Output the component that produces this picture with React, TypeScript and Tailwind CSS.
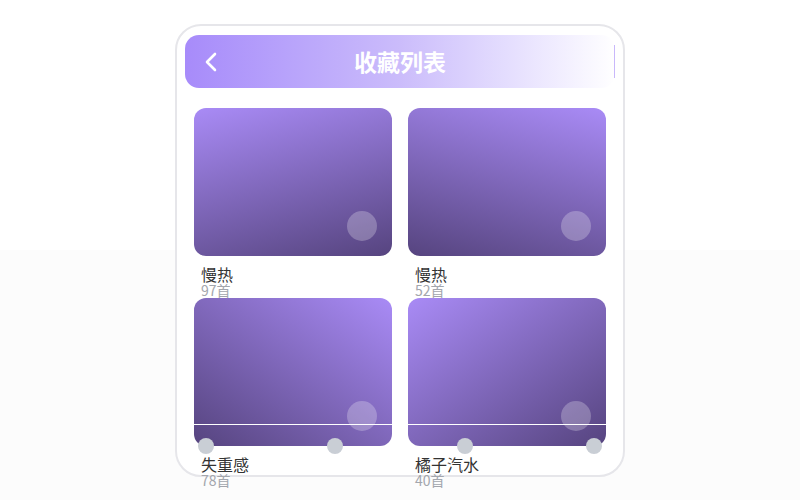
import React from "react"

type Item = { name: string; count: number; grad: string }

const items: Item[] = [
  { name: "慢热", count: 97, grad: "bg-[linear-gradient(165deg,#a98bf6,#56447f)]" },
  { name: "慢热", count: 52, grad: "bg-[linear-gradient(195deg,#a98bf6,#56447f)]" },
  { name: "失重感", count: 78, grad: "bg-[linear-gradient(215deg,#a98bf6,#56447f)]" },
  { name: "橘子汽水", count: 40, grad: "bg-[linear-gradient(145deg,#a98bf6,#56447f)]" },
]

function Card({ item }: { item: Item }) {
  return (
    <div className="flex flex-col">
      <div className={`relative h-[148px] rounded-[12px] ${item.grad}`}>
        <div className="absolute right-[15px] bottom-[15px] h-[30px] w-[30px] rounded-full bg-white/25" />
      </div>
      <div className="px-[7px] pt-[9px]">
        <div className="text-[16px] leading-[18px] text-[#333]">{item.name}</div>
        <div className="text-[14px] leading-[15px] text-[#a3a6ad]">{item.count}首</div>
      </div>
    </div>
  )
}

function Dot() {
  return <div className="h-[16px] w-[16px] rounded-full bg-[#c9ced5]" />
}

export default function App() {
  return (
    <div
      className="flex h-[500px] w-[800px] justify-center bg-[linear-gradient(to_bottom,#ffffff_50%,#fcfcfc_50%)]"
      style={{ fontFamily: '"Noto Sans CJK SC", "Noto Sans", sans-serif' }}
    >
      <div className="mt-[24px] h-[453px] w-[450px] rounded-[26px] border-2 border-[#e6e6ea] bg-white px-[8px] pt-[9px]">
        <div className="grid h-[53px] grid-cols-[44px_1fr_44px] items-center rounded-[14px] bg-linear-to-r from-[#a78bfa] via-[#cbbcfb] to-white">
          <svg width="14" height="22" viewBox="0 0 14 22" className="ml-[19px]">
            <polyline points="11,3 3,11 11,19" fill="none" stroke="white" strokeWidth="2.6" strokeLinecap="round" strokeLinejoin="round" />
          </svg>
          <div className="text-center text-[23px] font-bold text-white">收藏列表</div>
          <div className="ml-auto h-[33px] w-px bg-[#c9b8fb]" />
        </div>
        <div className="relative mt-[20px] px-[9px]">
          <div className="grid grid-cols-2 gap-x-[16px]">
            {items.map((it, i) => (
              <Card key={i} item={it} />
            ))}
          </div>
          <div className="absolute inset-x-[3px] top-[316px] flex flex-col">
            <div className="h-px bg-white" />
            <div className="mt-[13px] grid grid-cols-2 gap-x-[16px] px-[6px]">
              <div className="flex justify-between pl-[4px] pr-[49px]">
                <Dot />
                <Dot />
              </div>
              <div className="flex justify-between pl-[49px] pr-[4px]">
                <Dot />
                <Dot />
              </div>
            </div>
          </div>
        </div>
      </div>
    </div>
  )
}
